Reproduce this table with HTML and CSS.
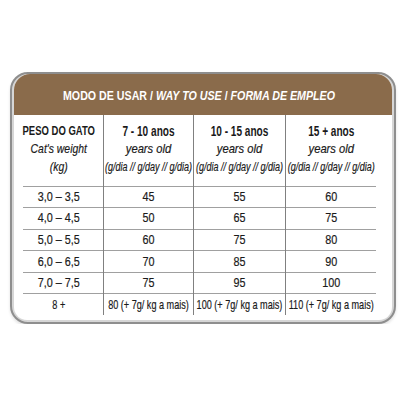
FILE: index.html
```html
<!DOCTYPE html>
<html>
<head>
<meta charset="utf-8">
<link rel="stylesheet" href="styles.css">
</head>
<body>
<div class="card">
  <div class="panel">
    <div class="title"><span class="t"><b>MODO DE USAR</b> / <i>WAY TO USE</i> / <i>FORMA DE EMPLEO</i></span></div>
    <div class="body">
      <table class="feed">
        <colgroup>
          <col class="c1"><col class="c2"><col class="c3"><col class="c4">
        </colgroup>
        <thead>
          <tr>
            <th class="first"><span class="t main weight">PESO DO GATO</span><span class="t sub cat">Cat's weight</span><span class="t sub cat">(kg)</span></th>
            <th><span class="t main">7 - 10 anos</span><span class="t sub">years old</span><span class="t unit">(g/dia // g/day // g/dia)</span></th>
            <th><span class="t main">10 - 15 anos</span><span class="t sub">years old</span><span class="t unit">(g/dia // g/day // g/dia)</span></th>
            <th><span class="t main">15 + anos</span><span class="t sub">years old</span><span class="t unit">(g/dia // g/day // g/dia)</span></th>
          </tr>
        </thead>
        <tbody>
          <tr><td class="first"><span class="t">3,0 – 3,5</span></td><td><span class="t">45</span></td><td><span class="t">55</span></td><td><span class="t">60</span></td></tr>
          <tr><td class="first"><span class="t">4,0 – 4,5</span></td><td><span class="t">50</span></td><td><span class="t">65</span></td><td><span class="t">75</span></td></tr>
          <tr><td class="first"><span class="t">5,0 – 5,5</span></td><td><span class="t">60</span></td><td><span class="t">75</span></td><td><span class="t">80</span></td></tr>
          <tr><td class="first"><span class="t">6,0 – 6,5</span></td><td><span class="t">70</span></td><td><span class="t">85</span></td><td><span class="t">90</span></td></tr>
          <tr><td class="first"><span class="t">7,0 – 7,5</span></td><td><span class="t">75</span></td><td><span class="t">95</span></td><td><span class="t">100</span></td></tr>
          <tr class="last"><td class="first"><span class="t">8 +</span></td><td><span class="t">80 (+ 7g/ kg a mais)</span></td><td><span class="t">100 (+ 7g/ kg a mais)</span></td><td><span class="t">110 (+ 7g/ kg a mais)</span></td></tr>
        </tbody>
      </table>
    </div>
  </div>
</div>
</body>
</html>
```
FILE: styles.css
```css
html, body {
  margin: 0;
  padding: 0;
  background: #ffffff;
}
body {
  font-family: "Liberation Sans", Arial, sans-serif;
  color: #1a1a1a;
  padding: 72px 0 0 10px;
}
.card {
  width: 378px;
  border: 2px solid #8e8e8e;
  border-radius: 18px;
  background: #d6d6d6;
  padding: 0 2px 2px 2px;
  box-shadow: 0 2px 3px rgba(0,0,0,0.12);
}
.panel {
  background: #fff;
  border-radius: 16px 16px 13px 13px;
  overflow: hidden;
}
.t {
  display: block;
  margin: 0 -40px;
  text-align: center;
  white-space: nowrap;
  transform: scaleX(0.8);
  -webkit-text-stroke: 0.2px currentColor;
}
.title {
  background: #8a6b4b;
  color: #fff;
  height: 41px;
  box-sizing: border-box;
  padding: 15px 8px 0 0;
  font-size: 13px;
  font-weight: bold;
  line-height: 14px;
}
.title .t { transform: scaleX(0.82); -webkit-text-stroke: 0; }
.title i { font-weight: bold; }
.body {
  padding: 0 12px 5px 9px;
}
.feed {
  border-collapse: collapse;
  table-layout: fixed;
  width: 353px;
}
.c1 { width: 80px; }
.c2 { width: 90px; }
.c3 { width: 92px; }
.c4 { width: 91px; }
.feed th, .feed td {
  padding: 0;
  text-align: center;
  border-left: 1px solid #808080;
}
.feed .first { border-left: none; padding-right: 8px; }
.feed th {
  height: 71px;
  vertical-align: top;
  padding-top: 7px;
  box-sizing: border-box;
  font-weight: normal;
}
.feed th .t { line-height: 18px; }
.feed th .main { font-weight: bold; font-size: 14px; transform: scaleX(0.72); -webkit-text-stroke: 0; }
.feed th .weight { font-size: 13px; transform: scaleX(0.73); }
.feed th .sub { font-style: italic; font-size: 13px; transform: scaleX(0.86); }
.feed th .cat { font-size: 13.5px; transform: scaleX(0.77); }
.feed th .unit { font-style: italic; font-size: 12px; transform: scaleX(0.75); }
.feed td {
  height: 21.6px;
  border-top: 1px solid #a0a0a0;
  font-size: 13.5px;
  line-height: 20px;
  box-sizing: border-box;
}
.feed .last td { height: 21px; font-size: 13px; }
.feed .last .t { transform: scaleX(0.7); }
```
